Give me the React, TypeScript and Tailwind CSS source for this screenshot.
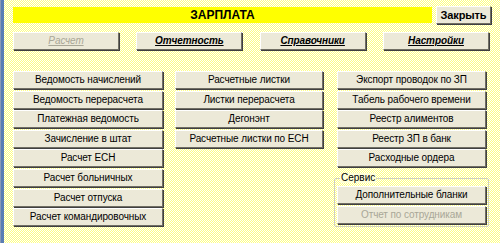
import React from 'react';

const btn =
  'flex items-center justify-center h-[18px] bg-[#ece9d8] border border-t-white border-l-white border-r-[#716f64] border-b-[#716f64] shadow-[1px_1px_0_#404040] text-[10px] tracking-[-0.1px] leading-none whitespace-nowrap';

const left = [
  'Ведомость начислений',
  'Ведомость перерасчета',
  'Платежная ведомость',
  'Зачисление в штат',
  'Расчет ЕСН',
  'Расчет больничных',
  'Расчет отпуска',
  'Расчет командировочных',
];

const middle = ['Расчетные листки', 'Листки перерасчета', 'Дегонэнт', 'Расчетные листки по ЕСН'];

const right = [
  'Экспорт проводок по ЗП',
  'Табель рабочего времени',
  'Реестр алиментов',
  'Реестр ЗП в банк',
  'Расходные ордера',
];

const nav = [
  { label: 'Расчет', disabled: true },
  { label: 'Отчетность' },
  { label: 'Справочники' },
  { label: 'Настройки' },
];

const Column: React.FC<{ items: string[]; width: string }> = ({ items, width }) => (
  <div className={`flex flex-col gap-[1.6px] ${width}`}>
    {items.map(t => (
      <div key={t} className={`${btn} text-black`}>
        {t}
      </div>
    ))}
  </div>
);

export default function App() {
  return (
    <div className="flex w-[500px] h-[243px] overflow-hidden bg-[image:repeating-conic-gradient(#ffff80_0%_25%,#ffffff_0%_50%)] bg-[length:2px_2px] font-['Liberation_Sans',Arial,sans-serif]">
      <div className="w-[4px] shrink-0 border-l border-[#8a9ab5] bg-[#5a7db3]" />
      <div className="flex-1 flex flex-col pl-[9px] pr-[13px] pt-[6px]">
        <div className="flex items-center gap-[4px]">
          <div className="flex-1 h-[16px] bg-[#ffff00] flex items-center justify-center text-[12px] font-bold text-black">
            ЗАРПЛАТА
          </div>
          <div className={`${btn} w-[55px] h-[17px] text-[11px] font-bold text-black -mr-[2px]`}>Закрыть</div>
        </div>

        <div className="flex justify-between mt-[8px]">
          {nav.map(n => (
            <div
              key={n.label}
              className={`${btn} w-[106px] h-[17px] italic underline ${
                n.disabled ? 'text-[#a9a797]' : 'font-bold text-black'
              }`}
            >
              {n.label}
            </div>
          ))}
        </div>

        <div className="flex mt-[21px]">
          <Column items={left} width="w-[150px]" />
          <div className="ml-[12px]">
            <Column items={middle} width="w-[148px]" />
          </div>
          <div className="ml-[14px] flex flex-col">
            <Column items={right} width="w-[149px]" />
            <div className="relative mt-[11px] -ml-[3px] w-[155px] border border-[#d0d0bf] rounded-[2px] px-[2px] pt-[7px] pb-[2px]">
              <span className="absolute -top-[6px] left-[5px] px-[1px] text-[10px] leading-none text-black bg-[#ffffd8]">
                Сервис
              </span>
              <div className="flex flex-col gap-[1.6px]">
                <div className={`${btn} text-black`}>Дополнительные бланки</div>
                <div className={`${btn} text-[#a9a797]`}>Отчет по сотрудникам</div>
              </div>
            </div>
          </div>
        </div>
      </div>
    </div>
  );
}
